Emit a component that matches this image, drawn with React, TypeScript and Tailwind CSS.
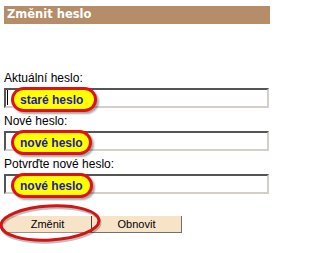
const labelFont = { fontFamily: '"Liberation Sans", Arial, sans-serif' };

function Pill({ text, width }: { text: string; width: string }) {
  return (
    <div
      className={`absolute left-[5px] top-[-3px] z-10 flex h-[25px] ${width} items-center rounded-full border-[3px] border-[#e01010] bg-[#ffff00] pl-[6px] text-[12px] font-bold text-[#1c1ca8] shadow-[2px_2px_2px_rgba(0,0,0,0.35)]`}
      style={labelFont}
    >
      {text}
    </div>
  );
}

function Field({
  label,
  pill,
  pillWidth,
  caret,
}: {
  label: string;
  pill: string;
  pillWidth: string;
  caret?: boolean;
}) {
  return (
    <div>
      <div className="flex h-[23px] items-end pb-[3px] text-[12px] leading-[14px] text-black">
        {label}
      </div>
      <div className="relative h-[20px] w-[265px] border-2 border-t-[#555555] border-l-[#555555] border-r-[#d4d0c8] border-b-[#d4d0c8] bg-white">
        {caret && (
          <span className="absolute left-[1px] top-[0px] h-[15px] w-px bg-black" />
        )}
        <Pill text={pill} width={pillWidth} />
      </div>
    </div>
  );
}

export default function App() {
  return (
    <div
      className="relative h-[253px] w-[288px] overflow-hidden bg-white"
      style={labelFont}
    >
      <div className="px-[4px] pt-[6px]">
        <div
          className="flex h-[18px] w-[266px] items-center bg-[#b58e69] pl-[3px] text-[11.5px] font-bold text-white"
          style={{ fontFamily: '"DejaVu Sans", Verdana, sans-serif' }}
        >
          Změnit heslo
        </div>

        <div className="mt-[41px]">
          <Field label="Aktuální heslo:" pill="staré heslo" pillWidth="w-[86px]" caret />
          <Field label="Nové heslo:" pill="nové heslo" pillWidth="w-[81px]" />
          <Field label="Potvrďte nové heslo:" pill="nové heslo" pillWidth="w-[82px]" />
        </div>

        <div className="mt-[22px] flex text-[11px] text-black">
          <button className="h-[17px] w-[88px] border-r border-b border-r-[#404040] border-b-[#a09080] bg-[#f7e4c8] leading-[15px]">
            Změnit
          </button>
          <button className="h-[17px] w-[90px] border-r border-b border-r-[#707070] border-b-[#707070] bg-[#f7e4c8] leading-[15px]">
            Obnovit
          </button>
        </div>
      </div>

      <svg
        className="pointer-events-none absolute left-[-2px] top-[201px]"
        width="104"
        height="44"
        viewBox="0 0 104 44"
      >
        <ellipse
          cx="52"
          cy="23"
          rx="49"
          ry="17"
          fill="none"
          stroke="rgba(0,0,0,0.25)"
          strokeWidth="3"
          transform="translate(1 1) rotate(-3 52 23)"
        />
        <ellipse
          cx="52"
          cy="22"
          rx="49"
          ry="17"
          fill="none"
          stroke="#d21414"
          strokeWidth="3"
          transform="rotate(-3 52 22)"
        />
      </svg>
    </div>
  );
}
